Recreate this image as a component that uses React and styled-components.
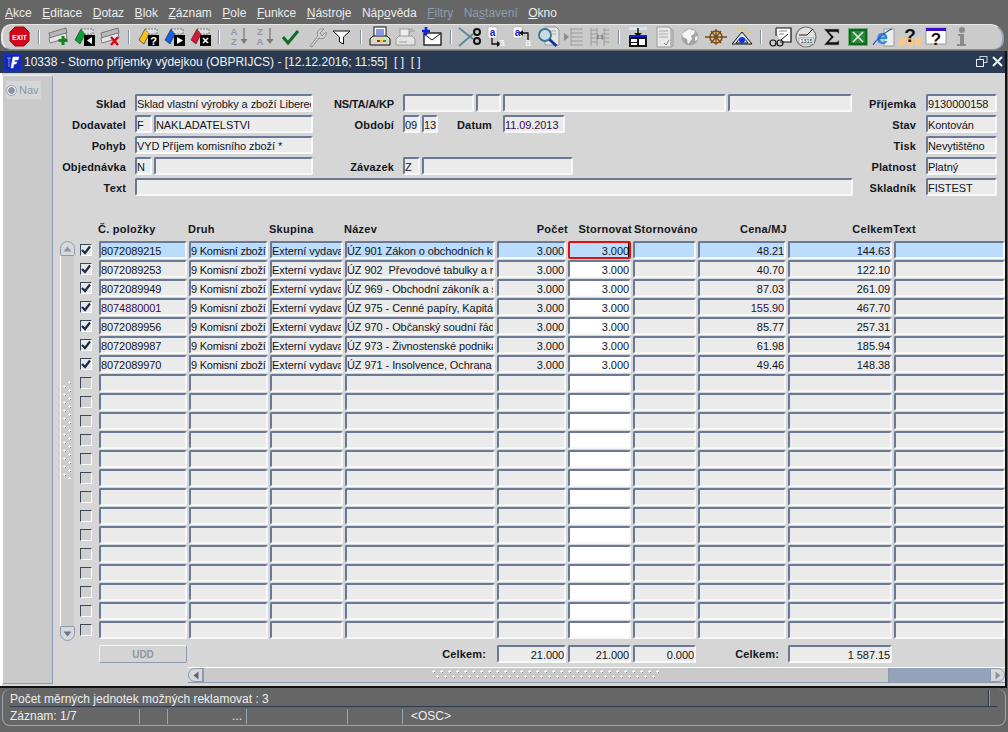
import React from 'react';
import styled, { createGlobalStyle } from 'styled-components';

const Global = createGlobalStyle`
  html, body { margin: 0; padding: 0; background: #666666; }
  body { font-family: "Liberation Sans", Arial, sans-serif; }
  * { box-sizing: border-box; }
`;

const Page = styled.div`
  width: 1008px; height: 732px; overflow: hidden;
  display: flex; flex-direction: column; background: #666666;
  font: 11px "Liberation Sans", Arial, sans-serif; color: #10141c;
`;
const MenuBar = styled.div`
  height: 24px; padding: 5px 0 0 5px; display: flex; gap: 10.5px;
  font-size: 12px; line-height: 16px; color: #ececec;
`;
const MenuItem = styled.span`
  color: ${p => (p.$off ? '#8f9db2' : '#ececec')};
  & u { text-underline-offset: 1px; }
`;
const Toolbar = styled.div`
  height: 26px; margin: 0 4px 0 1px; padding: 0 0 0 4px; display: flex; align-items: center;
  background: #cbcbcb; border: 1px solid #e8e8e8; border-left-width: 2px; border-right: 2px solid #9aa6b8;
  border-bottom: 1px solid #8794a8; border-radius: 10px 14px 10px 10px;
`;
const ToolIcon = styled.span`
  width: 26px; height: 24px; flex: none; display: flex; align-items: center; justify-content: center;
`;
const ToolSep = styled.span`
  width: 2px; height: 14px; margin: 0 5px 0 5px; flex: none;
  background: #7f8fa8; border-right: 1px solid #fff;
`;
const Window = styled.div`
  flex: 1; margin: 1px 1px 0 0; display: flex; flex-direction: column; min-height: 0;
  border-right: 2px solid #111; border-bottom: 2px solid #111;
`;
const TitleBar = styled.div`
  height: 22px; flex: none; background: #2a3a52; display: flex; align-items: center;
  padding: 0 0 0 4px; color: #f0f2f5; font-size: 12px; white-space: pre;
`;
const TitleLogo = styled.span`
  width: 17px; height: 17px; margin-right: 3px; flex: none; display: flex;
  background: #fff; border: 1px solid #1a2fc0;
`;
const TitleText = styled.span` flex: 1; `;
const Body = styled.div`
  flex: 1; display: flex; background: #d6d6d6; border-left: 2px solid #fff; min-height: 0;
`;
const NavPanel = styled.div`
  width: 51px; flex: none; margin: 2px 0 2px; padding: 5px 0 0 3px; background: #cacaca;
  border: 1px solid #8a9ab0; border-left-color: #fff; border-top-color: #f0f0f0; border-radius: 0 3px 0 0;
`;
const NavTab = styled.div`
  width: 35px; height: 18px; display: flex; align-items: center; gap: 2px;
  background: #d6d6d6; color: #8696ac; font-size: 11px;
`;
const NavRadio = styled.span`
  width: 11px; height: 11px; flex: none; border-radius: 50%;
  background: radial-gradient(circle, #8a94a4 0 3px, #e8e8e8 3.5px 5.5px);
  border: 1px solid #98a4b6;
`;
const Main = styled.div`
  flex: 1; min-width: 0; display: flex; flex-direction: column;
`;
const Form = styled.div`
  margin-top: 21px; display: grid; height: 102px;
  grid-template-columns: 73px 187px 81px 459px 63px 81px;
  grid-template-rows: repeat(5, 18px); row-gap: 3px;
`;
const Label = styled.label`
  display: flex; align-items: center; justify-content: flex-end; white-space: nowrap; padding-top: 1px;
  font-weight: bold; font-size: 11px; letter-spacing: ${p => (p.$tight ? '-0.15px' : '0.15px')}; color: #14161c;
  grid-column: ${p => p.$col}; grid-row: ${p => p.$row};
`;
const FieldGroup = styled.div`
  display: flex; gap: 2px; min-width: 0;
  grid-column: ${p => p.$col}; grid-row: ${p => p.$row};
  margin-left: ${p => p.$ml || 0}px;
`;
const Field = styled.div`
  height: 18px; flex: ${p => (p.$w ? `0 0 ${p.$w}px` : '1 1 0')}; min-width: 0;
  background: ${p => p.$bg || '#ebebeb'};
  border: 2px solid; border-color: #6a7a96 #f8f8f8 #f8f8f8 #6a7a96; border-radius: 2px;
  padding: 1px 0 0; font-size: 11px; line-height: 14px;
  letter-spacing: ${p => (p.$tight ? '-0.25px' : '-0.08px')}; color: ${p => p.$color || '#10141c'};
  text-align: ${p => (p.$right ? 'right' : 'left')};
  white-space: pre; overflow: hidden;
  position: relative;
`;
const InlineLabel = styled.span`
  flex: 0 0 ${p => p.$w}px; display: flex; align-items: center; justify-content: flex-end; padding-top: 1px;
  padding-right: 9px; font-weight: bold; letter-spacing: 0.15px; color: #14161c; white-space: nowrap;
`;
const Table = styled.div`
  margin-top: 5px; display: flex; height: 402px;
`;
const VScroll = styled.div`
  width: 16px; height: 400px; margin: 0 0 0 7px; flex: none; display: flex; flex-direction: column; align-items: flex-start;
`;
const VArrow = styled.div`
  width: 15px; height: 15px; flex: none; background: #d8d8d8; display: flex; align-items: center; justify-content: center;
  border: 1px solid #8c9ab0; border-radius: ${p => (p.$up ? '8px 8px 2px 2px' : '2px 2px 8px 8px')};
`;
const VTrack = styled.div`
  flex: 1; width: 14px; background: #cccccc; display: flex; align-items: center; justify-content: center;
  border-left: 1px solid #fff; padding-bottom: 23px;
`;
const VGrip = styled.div`
  width: 10px; height: 98px;
  background-image:
    radial-gradient(circle at 6.5px 1.5px, #f8f8f8 0 1px, transparent 1.1px),
    radial-gradient(circle at 1.5px 5.5px, #f8f8f8 0 1px, transparent 1.1px),
    radial-gradient(circle at 7.5px 2.5px, #8e8e8e 0 .6px, transparent .8px),
    radial-gradient(circle at 2.5px 6.5px, #8e8e8e 0 .6px, transparent .8px);
  background-size: 10px 8px;
`;
const HGrip = styled.div`
  width: 228px; height: 10px;
  background-image:
    radial-gradient(circle at 1.5px 1.5px, #f8f8f8 0 1px, transparent 1.1px),
    radial-gradient(circle at 5.5px 6.5px, #f8f8f8 0 1px, transparent 1.1px),
    radial-gradient(circle at 2.5px 2.5px, #8e8e8e 0 .6px, transparent .8px),
    radial-gradient(circle at 6.5px 7.5px, #8e8e8e 0 .6px, transparent .8px);
  background-size: 8px 10px;
`;
const Checks = styled.div`
  width: 23px; flex: none; display: flex; flex-direction: column; gap: 7px; padding: 3px 0 0 4px;
`;
const Check = styled.div`
  width: 12px; height: 12px; background: ${p => (p.$on ? '#e8e8e8' : '#d0d0d0')}; display: flex; align-items: center; justify-content: center;
  border: 1px solid; border-color: #3c4656 #fff #fff #3c4656;
`;
const Cols = `88px 79px 73px 150px 69px 63px 63px 88px 104px 111px`;
const Grid = styled.div`
  flex: 0 0 auto; display: grid; grid-template-columns: ${Cols}; grid-auto-rows: 18px; column-gap: 2px; row-gap: 1px;
`;
const Header = styled.div`
  margin-top: 26px; display: grid; grid-template-columns: ${Cols}; column-gap: 2px; padding-left: 45px; height: 14px;
`;
const HeadCell = styled.div`
  font-weight: bold; font-size: 11px; letter-spacing: 0.25px; line-height: 14px; white-space: nowrap;
  text-align: ${p => (p.$right ? 'right' : 'left')}; color: #14161c;
  margin-right: ${p => -(p.$over || 0)}px;
  margin-left: ${p => p.$ml || 0}px;
`;
const Caret = styled.span`
  position: absolute; right: 0; top: 0; width: 1px; height: 14px; background: #000;
`;
const RedField = styled(Field)`
  border-color: #e80c0c;
`;
const Footer = styled.div`
  margin-top: 2px; height: 18px; padding-left: 46px; display: grid; grid-template-columns: ${Cols}; column-gap: 2px;
`;
const UddButton = styled.div`
  height: 18px; background: #d4d4d4; border: 1px solid; border-color: #f4f4f4 #8c9ab0 #8c9ab0 #f4f4f4; border-radius: 2px;
  color: #8e98a8; text-align: center; line-height: 18px; font-size: 10px; font-weight: bold;
`;
const FootLabel = styled.div`
  font-weight: bold; letter-spacing: .15px; text-align: right; line-height: 18px; padding-right: ${p => p.$pr}px;
  grid-column: ${p => p.$col}; color: #14161c;
`;
const HScroll = styled.div`
  margin: 4px 0 0 135px; height: 16px; width: 817px; display: flex; border-top: 1px solid #fff; border-bottom: 1px solid #8c9ab0;
`;
const HArrow = styled.div`
  width: 15px; flex: none; background: #d8d8d8; display: flex; align-items: center; justify-content: center;
  border: 1px solid #8c9ab0; border-radius: ${p => (p.$left ? '7px 0 0 7px' : '0 7px 7px 0')};
`;
const HThumb = styled.div`
  width: 686px; flex: none; background: #cacaca; display: flex; align-items: center; justify-content: center;
  border-left: 1px solid #8c9ab0; border-right: 1px solid #8c9ab0;
`;
const HTrack = styled.div` flex: 1; background: #94a3b8; `;
const StatusBar = styled.div`
  height: 44px; flex: none; padding: 1px 2px 6px 2px; color: #eceef0; font-size: 12px; display: flex; flex-direction: column;
`;
const StatusInner = styled.div`
  flex: 1; border: 1px solid #98a6ba; border-top: 0; border-radius: 8px; padding: 0 8px 0 7px;
  display: flex; flex-direction: column;
`;
const StatusTop = styled.div`
  height: 18px; line-height: 18px; padding-top: 1px; border-bottom: 1px solid #2a3a52; display: flex; justify-content: space-between;
`;
const StatusTopEnd = styled.span`
  width: 2px; height: 16px; margin-right: 7px; background: #2a3a52; border-right: 1px solid #8c9ab0;
`;
const StatusRow = styled.div`
  flex: 1; display: flex; font-size: 12px; padding-top: 2px;
`;
const StatusCell = styled.span`
  flex: 0 0 ${p => p.$w}px; height: 15px; line-height: 15px; white-space: nowrap;
  border-right: ${p => (p.$last ? 'none' : '1px solid #98a6ba')};
  padding-left: ${p => p.$pl || 0}px;
`;

/* ---------- toolbar icons (each one a small drawing) ---------- */
const Svg = ({ children }) => (
  <svg width="24" height="22" viewBox="0 0 24 22" fill="none">{children}</svg>
);
const Film = ({ c = '#b8b8b8', d = '#666' }) => (
  <g>
    <path d="M3 7 L20 2 L21 7 L4 12 Z" fill={c} stroke={d} strokeWidth=".8" />
    <path d="M3 12 L20 7 L21 12 L4 17 Z" fill="#e4e4e4" stroke={d} strokeWidth=".8" />
  </g>
);
const Folder = ({ c }) => (
  <g>
    <path d="M3 14 L9 3 L14 6 L8 18 Z" fill={c} stroke="#222" strokeWidth=".6" />
    <path d="M9 3 L21 3 L21 8 L13 8 Z" fill="#ddd" stroke="#555" strokeWidth=".7" strokeDasharray="2 1" />
  </g>
);
const BlackBox = ({ children }) => (
  <g><rect x="12" y="9" width="11" height="11" fill="#000" />{children}</g>
);
const Exit = () => (
  <svg width="24" height="22" viewBox="0 0 24 22">
    <polygon points="7,1 16,1 21,6 21,15 16,20 7,20 2,15 2,6" fill="#d4081c" stroke="#a00" />
    <text x="11.5" y="13.5" fontSize="6.6" fontWeight="bold" fill="#fff" textAnchor="middle" fontFamily="Liberation Sans">EXIT</text>
  </svg>
);
const AddRec = () => (
  <Svg><Film /><path d="M17 10v9M12.5 14.5h9" stroke="#0a8a1a" strokeWidth="3" /></Svg>
);
const DupRec = () => (
  <Svg><Folder c="#0aa030" /><BlackBox><path d="M20 11 L15 14.5 L20 18Z" fill="#fff" /></BlackBox></Svg>
);
const DelRec = () => (
  <Svg><Film /><path d="M13 11l7 8M20 11l-7 8" stroke="#e00010" strokeWidth="2.4" /></Svg>
);
const QueryQ = () => (
  <Svg><Folder c="#f8c018" /><BlackBox><text x="17.5" y="18.5" fontSize="11" fontWeight="bold" fill="#fff" textAnchor="middle" fontFamily="Liberation Sans">?</text></BlackBox></Svg>
);
const QueryRun = () => (
  <Svg><Folder c="#1060e8" /><BlackBox><path d="M15 11 L21 14.5 L15 18Z" fill="#fff" /></BlackBox></Svg>
);
const QueryX = () => (
  <Svg><Folder c="#d81830" /><BlackBox><path d="M15 12l5 5M20 12l-5 5" stroke="#fff" strokeWidth="1.6" /></BlackBox></Svg>
);
const SortText = ({ a, b }) => (
  <svg width="24" height="22" viewBox="0 0 24 22">
    <text x="8" y="9" fontSize="9.5" fontWeight="bold" fill="#8e98a8" textAnchor="middle" fontFamily="Liberation Sans">{a}</text>
    <text x="8" y="19" fontSize="9.5" fontWeight="bold" fill="#8e98a8" textAnchor="middle" fontFamily="Liberation Sans">{b}</text>
    <path d="M18 2v12" stroke="#7a7a7a" strokeWidth="1.3" /><path d="M14.5 13h7L18 18z" fill="#7a7a7a" />
  </svg>
);
const CheckMark = () => (
  <Svg><path d="M5 11l5 6 10-12" stroke="#0e6b24" strokeWidth="3" /></Svg>
);
const Wrench = () => (
  <Svg><path d="M6 20 L14 10 C12 6 15 2 20 3 L16 7 L18 10 L22 6 C23 11 19 14 15 12 L8 21 Z" fill="#d4d4d4" stroke="#8e8e8e" /></Svg>
);
const Funnel = () => (
  <Svg><path d="M3 5h17l-6.5 6v7l-4-2v-5z" fill="#fff" stroke="#111" strokeWidth="1" /></Svg>
);
const Printer = () => (
  <Svg>
    <rect x="6" y="1" width="12" height="10" fill="#fff" stroke="#111" />
    <path d="M8 4h8M8 6h8M8 8h8" stroke="#1030c8" />
    <path d="M2 13l3-3h14l3 3v6H2z" fill="#d8d8c8" stroke="#111" />
    <path d="M9 15h3" stroke="#e01010" strokeWidth="2" /><path d="M12 15h3" stroke="#e0d010" strokeWidth="2" /><path d="M15 15h3" stroke="#10b020" strokeWidth="2" />
  </Svg>
);
const PrintGrey = () => (
  <Svg>
    <path d="M12 6a7 7 0 0 1 7-3M14 9a6 6 0 0 1 7-4" stroke="#9a9a9a" />
    <rect x="6" y="3" width="9" height="8" fill="#eee" stroke="#9a9a9a" />
    <path d="M2 13l3-3h13l3 3v6H2z" fill="#e4e4e4" stroke="#9a9a9a" /><path d="M5 16h8" stroke="#9a9a9a" />
  </Svg>
);
const Mail = () => (
  <Svg>
    <rect x="4" y="7" width="17" height="12" fill="#fff" stroke="#111" strokeWidth="1.3" />
    <path d="M4 8l8 6 8-6" stroke="#111" />
    <path d="M6 1v8M2 5h8" stroke="#1020e0" strokeWidth="2.6" />
  </Svg>
);
const Scissors = () => (
  <Svg>
    <path d="M1 2 L15 13 M1 20 L15 8" stroke="#5a8a9a" strokeWidth="1.8" />
    <circle cx="19" cy="6" r="3" stroke="#111" strokeWidth="2" />
    <circle cx="19" cy="15" r="3" stroke="#111" strokeWidth="2" />
  </Svg>
);
const CopyA = ({ back }) => (
  <svg width="24" height="22" viewBox="0 0 24 22">
    <rect x={back ? 3 : 4} y="1" width="9" height="11" fill="#fff" stroke="#bbb" />
    <text x={back ? 7.5 : 8.5} y="10" fontSize="10" fill="#1020d0" fontFamily="Liberation Sans" textAnchor="middle" fontWeight="bold">a</text>
    <path d={back ? 'M18 15V7H12' : 'M8 12v6h6'} stroke="#111" strokeWidth="1.3" fill="none" />
    <path d={back ? 'M13 4l-4 3 4 3z' : 'M13 15l4 3-4 3z'} fill="#111" />
    <text x="18" y="20" fontSize="10" fill="#fff" fontFamily="Liberation Sans" textAnchor="middle">a</text>
  </svg>
);
const Search = () => (
  <Svg>
    <path d="M9 1h11l3 3v15H9z" fill="#e4e4e4" stroke="#999" />
    <path d="M14 5h6M16 8h4" stroke="#aaa" />
    <circle cx="9" cy="9" r="6" fill="#c8dce8" stroke="#3a7a8a" strokeWidth="1.8" />
    <path d="M13.5 13.5l7 6.5" stroke="#1030a0" strokeWidth="2.8" />
  </Svg>
);
const Indent = () => (
  <Svg>
    <path d="M9 3h12M9 7h12M9 11h12M9 15h12M9 19h12" stroke="#9a9a9a" /><path d="M9 2v18" stroke="#9a9a9a" />
    <path d="M2 7l5 4-5 4z" fill="#8a8a8a" />
  </Svg>
);
const SplitCols = () => (
  <Svg>
    <path d="M3 2v18M9 2v18M16 2v18M3 4h6M3 8h6M3 12h6M3 16h6M16 4h5M16 8h5M16 12h5M16 16h5" stroke="#9a9a9a" />
    <path d="M9 8l5 3-5 3zM15 8l-5 3 5 3z" fill="#8a8a8a" />
  </Svg>
);
const Insert = () => (
  <Svg>
    <rect x="3" y="1" width="18" height="3" fill="#c8e8f8" /><path d="M12 2v7" stroke="#111" strokeWidth="1.5" /><path d="M8 7h8l-4 4z" fill="#111" />
    <rect x="3" y="9" width="18" height="12" fill="#111" /><rect x="5" y="13" width="6" height="3" fill="#fff" /><rect x="13" y="13" width="6" height="6" fill="#fff" /><rect x="5" y="17" width="6" height="2" fill="#fff" />
    <rect x="3" y="9" width="18" height="2" fill="#1020d0" />
  </Svg>
);
const Doc = () => (
  <Svg>
    <path d="M5 1h12l2 2v18H5z" fill="#e8e8e8" stroke="#9a9a9a" /><path d="M19 3l2 1v16l-2 1" stroke="#9a9a9a" />
    <path d="M7 5h9M7 8h9M7 11h9" stroke="#aaa" /><path d="M12 17l2 2 3-5" stroke="#888" />
  </Svg>
);
const Globe = () => (
  <Svg>
    <circle cx="12" cy="11" r="8.5" fill="#a4a4a4" />
    <path d="M6 6l5-3 6 2-1 3-3 2 1 3-4 5-1-5-4-2-1-3zM17 11l3-1-1 4-2 1z" fill="#f4f4f4" />
  </Svg>
);
const Wheel = () => (
  <Svg>
    <circle cx="12" cy="11" r="6" stroke="#7a4a0a" strokeWidth="1.6" />
    <path d="M1 11h22M12 3v16M7 5l10 12M17 5L7 17" stroke="#7a4a0a" strokeWidth="1.3" />
  </Svg>
);
const Eye = () => (
  <Svg>
    <path d="M12 6 L22 18 H2 Z" fill="#d8e4f0" stroke="#111" />
    <path d="M6 17 Q12 7 18 17 Z" fill="#fff" stroke="#111" />
    <circle cx="12" cy="14" r="3" fill="#1030e0" />
    <path d="M4 5l3 3M20 5l-3 3M12 1v3M8 2l1 3M16 2l-1 3" stroke="#e8d010" />
  </Svg>
);
const Glasses = () => (
  <Svg>
    <path d="M8 2h15v14H12" fill="#fff" stroke="#111" strokeWidth="1.2" />
    <path d="M8 2v8" stroke="#111" /><path d="M11 5h8M11 8h5" stroke="#888" /><path d="M13 14l7-6" stroke="#111" />
    <circle cx="5" cy="17" r="3" stroke="#111" strokeWidth="1.2" /><circle cx="12" cy="17" r="3" stroke="#111" strokeWidth="1.2" />
  </Svg>
);
const Calc = () => (
  <svg width="24" height="22" viewBox="0 0 24 22">
    <circle cx="12" cy="11" r="10" fill="#e0e0e0" stroke="#777" strokeWidth="1.2" />
    <path d="M5 9h8l6-6" stroke="#222" strokeWidth="1" fill="none" />
    <rect x="5" y="12" width="15" height="6" fill="#fff" stroke="#777" strokeWidth=".6" />
    <text x="12.5" y="17" fontSize="5.5" fill="#111" textAnchor="middle" fontFamily="Liberation Sans">1315</text>
  </svg>
);
const Sigma = () => (
  <Svg><path d="M4 3h15v5l-2-2H9l5 5-5 5h8l2-2v5H4l7-8z" fill="#111" stroke="#a0a0a0" strokeWidth=".6" /></Svg>
);
const Excel = () => (
  <Svg>
    <rect x="2" y="2" width="20" height="18" fill="#0a6a1a" />
    <rect x="2.5" y="2.5" width="19" height="17" stroke="#d8e8d8" strokeDasharray="1 1" />
    <rect x="5" y="5" width="14" height="12" fill="#2a8a3a" />
    <path d="M7 6l10 10M17 6L7 16" stroke="#fff" strokeWidth="1.4" />
  </Svg>
);
const IE = () => (
  <svg width="24" height="22" viewBox="0 0 24 22">
    <rect x="12" y="3" width="10" height="17" fill="#eee" stroke="#999" />
    <text x="10" y="18" fontSize="21" fontWeight="bold" fill="#2a8ad8" textAnchor="middle" fontFamily="Liberation Sans">e</text>
    <path d="M1 19C4 14 14 5 20 3" stroke="#1a5ab8" strokeWidth="1.2" fill="none" />
  </svg>
);
const Help = () => (
  <svg width="24" height="22" viewBox="0 0 24 22">
    <rect x="1" y="11" width="6" height="9" fill="#f8c888" /><rect x="9" y="11" width="6" height="9" fill="#f8c888" /><rect x="17" y="11" width="6" height="9" fill="#f8c888" />
    <text x="12" y="16" fontSize="19" fontWeight="bold" fill="#111" textAnchor="middle" fontFamily="Liberation Sans">?</text>
  </svg>
);
const HelpWin = () => (
  <svg width="24" height="22" viewBox="0 0 24 22">
    <rect x="2" y="2" width="20" height="16" fill="#fff" stroke="#999" />
    <rect x="2" y="2" width="20" height="3" fill="#3a10c8" />
    <text x="12" y="19" fontSize="17" fontWeight="bold" fill="#111" textAnchor="middle" fontFamily="Liberation Sans">?</text>
  </svg>
);
const Info = () => (
  <Svg>
    <circle cx="12" cy="4" r="3" fill="#8a8a8a" />
    <path d="M8 8h6v10h2v2H7v-2h3v-8H8z" fill="#8a8a8a" />
  </Svg>
);

const SortAZ = () => <SortText a="A" b="Z" />;
const SortZA = () => <SortText a="Z" b="A" />;
const CopyTo = () => <CopyA />;
const CopyFrom = () => <CopyA back />;

const toolbar = [
  Exit, '|', AddRec, DupRec, DelRec, '|', QueryQ, QueryRun, QueryX, '|',
  SortAZ, SortZA, CheckMark, Wrench, Funnel, '|',
  Printer, PrintGrey, Mail, '|', Scissors, CopyTo, CopyFrom, Search, Indent, SplitCols, '|',
  Insert, Doc, Globe, Wheel, Eye, '|', Glasses, Calc, Sigma, Excel, IE, Help, HelpWin, Info,
];

const menus = [
  ['', 'A', 'kce'], ['', 'E', 'ditace'], ['', 'D', 'otaz'], ['', 'B', 'lok'], ['', 'Z', 'áznam'],
  ['', 'P', 'ole'], ['', 'F', 'unkce'], ['', 'N', 'ástroje'], ['Náp', 'o', 'věda'],
  ['', 'F', 'iltry', true], ['Na', 's', 'tavení', true], ['', 'O', 'kno'],
];

const rows = [
  ['8072089215', 'ÚZ 901 Zákon o obchodních korporacích', '48.21', '144.63'],
  ['8072089253', 'ÚZ 902  Převodové tabulky a rejstřík', '40.70', '122.10'],
  ['8072089949', 'ÚZ 969 - Obchodní zákoník a související', '87.03', '261.09'],
  ['8074880001', 'ÚZ 975 - Cenné papíry, Kapitálový trh', '155.90', '467.70', true],
  ['8072089956', 'ÚZ 970 - Občanský soudní řád', '85.77', '257.31'],
  ['8072089987', 'ÚZ 973 - Živnostenské podnikání', '61.98', '185.94'],
  ['8072089970', 'ÚZ 971 - Insolvence, Ochrana', '49.46', '148.38'],
];
const blanks = Array.from({ length: 14 });
const SEL = '#bcdcfb';
const PURPLE = '#3a0a40';

const Tick = () => (
  <svg width="10" height="10" viewBox="0 0 10 10"><path d="M1 5 L4 8 L9 1.5" stroke="#1a2a48" strokeWidth="2.2" fill="none" /></svg>
);

export default function App() {
  return (
    <Page>
      <Global />
      <MenuBar>
        {menus.map(([a, b, c, off], i) => (
          <MenuItem key={i} $off={off}>{a}<u>{b}</u>{c}</MenuItem>
        ))}
      </MenuBar>
      <Toolbar>
        {toolbar.map((I, i) => (I === '|' ? <ToolSep key={i} /> : <ToolIcon key={i}><I /></ToolIcon>))}
      </Toolbar>
      <Window>
        <TitleBar>
          <TitleLogo>
            <svg width="15" height="15" viewBox="0 0 15 15">
              <rect width="15" height="15" fill="#1428b8" />
              <path d="M2 3h4M4 3v9M8 2h6l-1 3H10L9 7h3l-1 2H9l-1 4H6z" fill="#fff" stroke="#fff" strokeWidth=".5" />
            </svg>
          </TitleLogo>
          <TitleText>10338 - Storno příjemky výdejkou (OBPRIJCS) - [12.12.2016; 11:55]  [ ]  [ ]</TitleText>
          <svg width="30" height="14" viewBox="0 0 30 14" fill="none">
            <rect x="5" y="1.5" width="7" height="6" stroke="#c8ced8" />
            <rect x="1.5" y="4.5" width="7" height="7" fill="#2a3a52" stroke="#e8ecf0" />
            <path d="M18 2l9 9M27 2l-9 9" stroke="#f0f2f5" strokeWidth="2" />
          </svg>
        </TitleBar>
        <Body>
          <NavPanel>
            <NavTab><NavRadio />Nav</NavTab>
          </NavPanel>
          <Main>
            <Form>
              <Label $col={1} $row={1}>Sklad</Label>
              <FieldGroup $col={2} $row={1} $ml={9}><Field>Sklad vlastní výrobky a zboží Liberec</Field></FieldGroup>
              <Label $col={3} $row={1} $tight>NS/TA/A/KP</Label>
              <FieldGroup $col={4} $row={1} $ml={9}>
                <Field $w={71} /><Field $w={25} /><Field $w={223} /><Field $w={124} />
              </FieldGroup>
              <Label $col={5} $row={1}>Příjemka</Label>
              <FieldGroup $col={6} $row={1} $ml={10}><Field $w={71}>9130000158</Field></FieldGroup>

              <Label $col={1} $row={2}>Dodavatel</Label>
              <FieldGroup $col={2} $row={2} $ml={9}><Field $w={17}>F</Field><Field>NAKLADATELSTVI</Field></FieldGroup>
              <Label $col={3} $row={2}>Období</Label>
              <FieldGroup $col={4} $row={2} $ml={9}>
                <Field $w={17}>09</Field><Field $w={16}>13</Field>
                <InlineLabel $w={61}>Datum</InlineLabel>
                <Field $w={62} $color={PURPLE}>11.09.2013</Field>
              </FieldGroup>
              <Label $col={5} $row={2}>Stav</Label>
              <FieldGroup $col={6} $row={2} $ml={10}><Field $w={71}>Kontován</Field></FieldGroup>

              <Label $col={1} $row={3}>Pohyb</Label>
              <FieldGroup $col={2} $row={3} $ml={9}><Field>VYD Příjem komisního zboží *</Field></FieldGroup>
              <Label $col={5} $row={3}>Tisk</Label>
              <FieldGroup $col={6} $row={3} $ml={10}><Field $w={71}>Nevytištěno</Field></FieldGroup>

              <Label $col={1} $row={4}>Objednávka</Label>
              <FieldGroup $col={2} $row={4} $ml={9}><Field $w={17}>N</Field><Field /></FieldGroup>
              <Label $col={3} $row={4}>Závazek</Label>
              <FieldGroup $col={4} $row={4} $ml={9}><Field $w={17}>Z</Field><Field $w={151} /></FieldGroup>
              <Label $col={5} $row={4}>Platnost</Label>
              <FieldGroup $col={6} $row={4} $ml={10}><Field $w={71}>Platný</Field></FieldGroup>

              <Label $col={1} $row={5}>Text</Label>
              <FieldGroup $col="2 / 5" $row={5} $ml={9}><Field /></FieldGroup>
              <Label $col={5} $row={5}>Skladník</Label>
              <FieldGroup $col={6} $row={5} $ml={10}><Field $w={71}>FISTEST</Field></FieldGroup>
            </Form>

            <Header>
              <HeadCell>Č. položky</HeadCell>
              <HeadCell>Druh</HeadCell>
              <HeadCell>Skupina</HeadCell>
              <HeadCell>Název</HeadCell>
              <HeadCell $right $over={3}>Počet</HeadCell>
              <HeadCell $right $over={2}>Stornovat</HeadCell>
              <HeadCell $ml={2}>Stornováno</HeadCell>
              <HeadCell $right $over={2}>Cena/MJ</HeadCell>
              <HeadCell $right $over={2}>Celkem</HeadCell>
              <HeadCell>Text</HeadCell>
            </Header>

            <Table>
              <VScroll>
                <VArrow $up>
                  <svg width="9" height="6" viewBox="0 0 9 6"><path d="M0.5 5.5h8L4.5 .5z" fill="#8a96a8" /></svg>
                </VArrow>
                <VTrack><VGrip /></VTrack>
                <VArrow>
                  <svg width="9" height="6" viewBox="0 0 9 6"><path d="M.5 .5h8l-4 5z" fill="#6a7688" /></svg>
                </VArrow>
              </VScroll>
              <Checks>
                {rows.map((_, i) => <Check key={i} $on><Tick /></Check>)}
                {blanks.map((_, i) => <Check key={i} />)}
              </Checks>
              <Grid>
                {rows.map((r, i) => {
                  const bg = i === 0 ? SEL : undefined;
                  const col = r[4] ? PURPLE : undefined;
                  return (
                    <React.Fragment key={i}>
                      <Field $bg={bg} $color={col}>{r[0]}</Field>
                      <Field $bg={bg} $tight>9 Komisní zboží</Field>
                      <Field $bg={bg}>Externí vydavatelé</Field>
                      <Field $bg={bg}>{r[1]}</Field>
                      <Field $bg={bg} $right>3.000</Field>
                      {i === 0
                        ? <RedField $bg={bg} $right>3.000<Caret /></RedField>
                        : <Field $bg="#fff" $right>3.000</Field>}
                      <Field $bg={bg} />
                      <Field $bg={bg} $right $color={col}>{r[2]}</Field>
                      <Field $bg={bg} $right>{r[3]}</Field>
                      <Field $bg={bg} />
                    </React.Fragment>
                  );
                })}
                {blanks.map((_, i) => (
                  <React.Fragment key={i}>
                    <Field /><Field /><Field /><Field /><Field />
                    <Field $bg="#fff" />
                    <Field /><Field /><Field /><Field />
                  </React.Fragment>
                ))}
              </Grid>
            </Table>

            <Footer>
              <UddButton>UDD</UddButton>
              <FootLabel $col="2 / 5" $pr={9}>Celkem:</FootLabel>
              <Field $right>21.000</Field>
              <Field $right>21.000</Field>
              <Field $right>0.000</Field>
              <FootLabel $pr={7}>Celkem:</FootLabel>
              <Field $right>1 587.15</Field>
            </Footer>

            <HScroll>
              <HArrow $left>
                <svg width="6" height="9" viewBox="0 0 6 9"><path d="M5.5 .5v8l-5-4z" fill="#5a6678" /></svg>
              </HArrow>
              <HThumb><HGrip /></HThumb>
              <HTrack />
              <HArrow>
                <svg width="6" height="9" viewBox="0 0 6 9"><path d="M.5 .5v8l5-4z" fill="#8a96a8" /></svg>
              </HArrow>
            </HScroll>
          </Main>
        </Body>
      </Window>
      <StatusBar>
        <StatusInner>
          <StatusTop>
            Počet měrných jednotek možných reklamovat : 3
            <StatusTopEnd />
          </StatusTop>
          <StatusRow>
            <StatusCell $w={130}>Záznam: 1/7</StatusCell>
            <StatusCell $w={28} />
            <StatusCell $w={79} $pl={64}>...</StatusCell>
            <StatusCell $w={101} />
            <StatusCell $w={55} />
            <StatusCell $w={200} $pl={8} $last>&lt;OSC&gt;</StatusCell>
          </StatusRow>
        </StatusInner>
      </StatusBar>
    </Page>
  );
}
